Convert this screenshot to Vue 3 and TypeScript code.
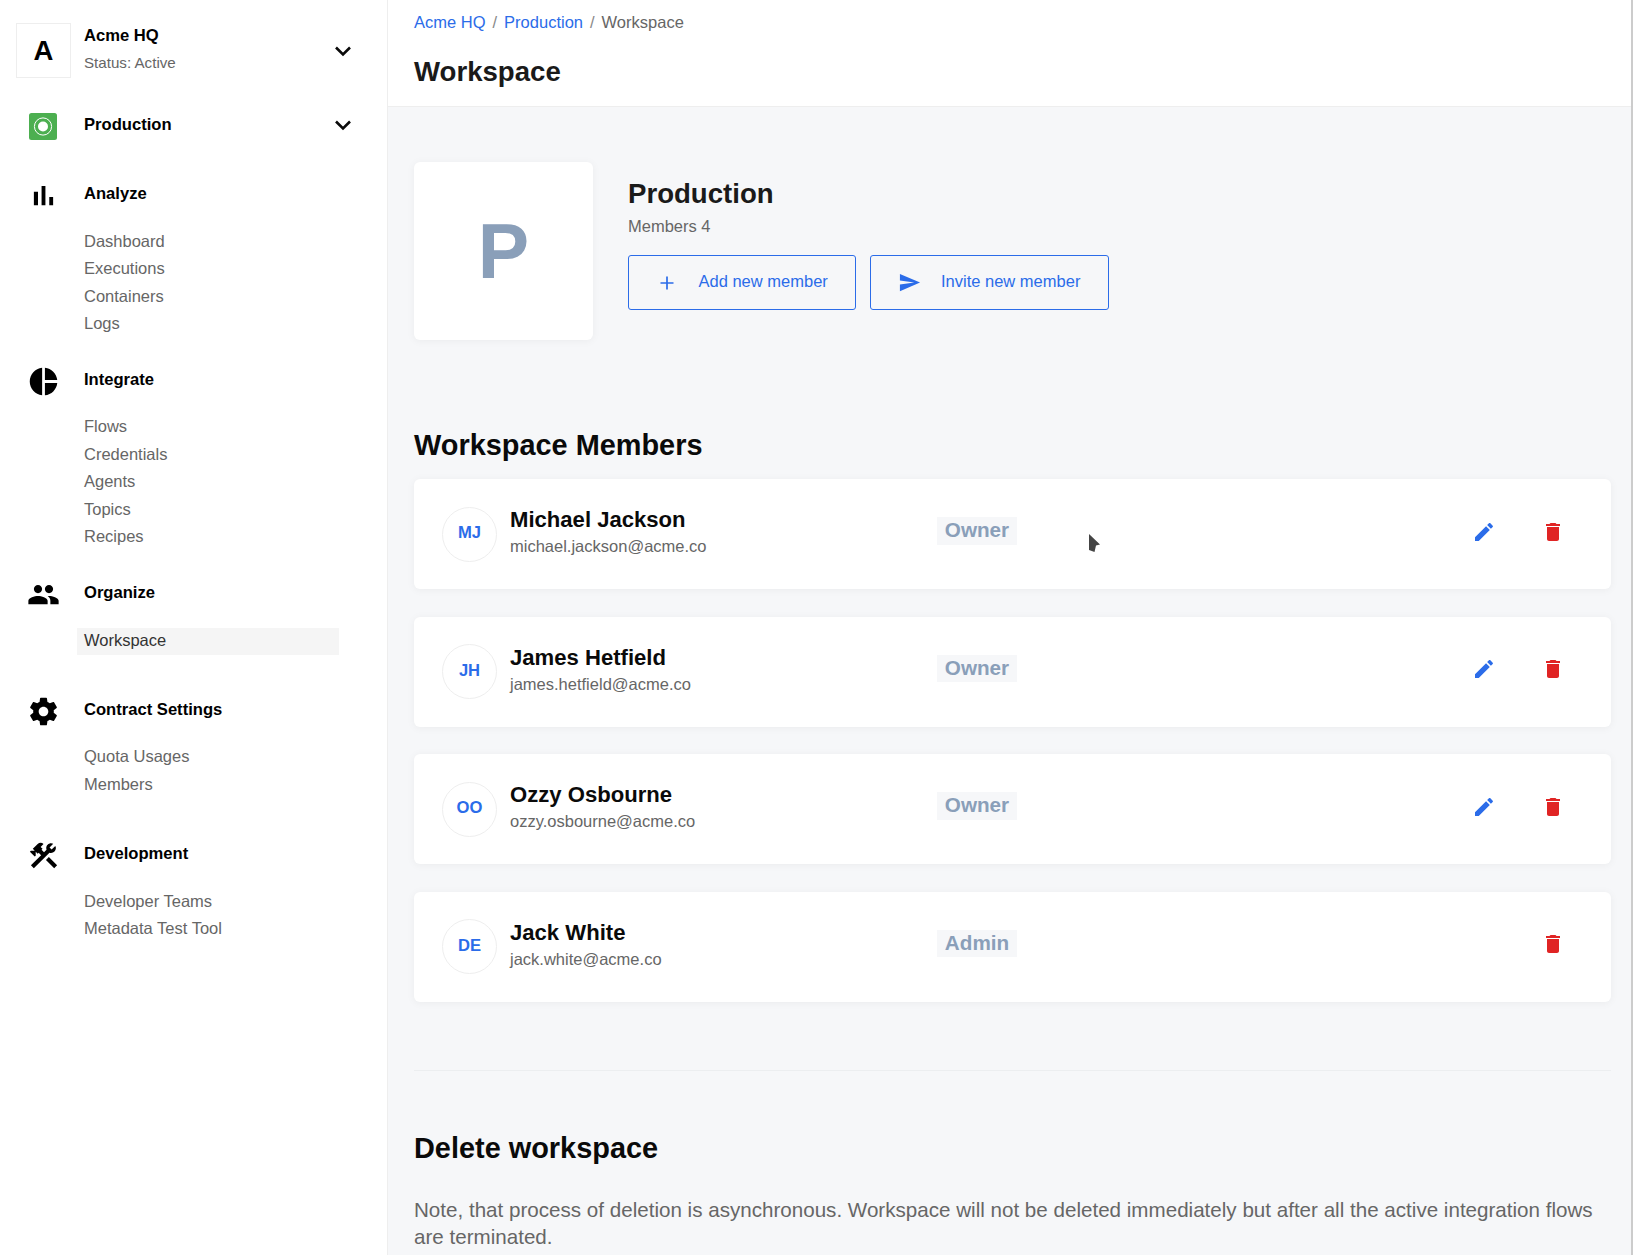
<script setup lang="ts">
interface Group {
  title: string
  icon: string
  items: string[]
  cls: string
}
interface Member {
  initials: string
  name: string
  email: string
  role: string
  editable: boolean
}

const groups: Group[] = [
  { title: 'Analyze', icon: 'bars', items: ['Dashboard', 'Executions', 'Containers', 'Logs'], cls: 'first' },
  { title: 'Integrate', icon: 'pie', items: ['Flows', 'Credentials', 'Agents', 'Topics', 'Recipes'], cls: '' },
  { title: 'Organize', icon: 'people', items: ['Workspace'], cls: '' },
  { title: 'Contract Settings', icon: 'gear', items: ['Quota Usages', 'Members'], cls: 'wide' },
  { title: 'Development', icon: 'tools', items: ['Developer Teams', 'Metadata Test Tool'], cls: 'wide' }
]

const icons: Record<string, string> = {
  bars: 'M5 9.2h3V19H5zM10.6 5h2.8v14h-2.8zM16.2 13H19v6h-2.8z',
  pie: 'M11 2v20c-5.07-.5-9-4.79-9-10s3.93-9.5 9-10zm2.03 0v8.99H22c-.47-4.74-4.24-8.52-8.97-8.99zm0 11.01V22c4.74-.47 8.5-4.25 8.97-8.99h-8.97z',
  people: 'M16 11c1.66 0 2.99-1.34 2.99-3S17.66 5 16 5c-1.66 0-3 1.34-3 3s1.34 3 3 3zm-8 0c1.66 0 2.99-1.34 2.99-3S9.66 5 8 5C6.34 5 5 6.34 5 8s1.34 3 3 3zm0 2c-2.33 0-7 1.17-7 3.5V19h14v-2.5c0-2.33-4.67-3.5-7-3.5zm8 0c-.29 0-.62.02-.97.05 1.16.84 1.97 1.97 1.97 3.45V19h6v-2.5c0-2.33-4.67-3.5-7-3.5z',
  gear: 'M19.43 12.98c.04-.32.07-.64.07-.98s-.03-.66-.07-.98l2.11-1.65c.19-.15.24-.42.12-.64l-2-3.46c-.12-.22-.39-.3-.61-.22l-2.49 1c-.52-.4-1.08-.73-1.69-.98l-.38-2.65C14.46 2.18 14.25 2 14 2h-4c-.25 0-.46.18-.49.42l-.38 2.65c-.61.25-1.17.59-1.69.98l-2.49-1c-.23-.09-.49 0-.61.22l-2 3.46c-.13.22-.07.49.12.64l2.11 1.65c-.04.32-.07.65-.07.98s.03.66.07.98l-2.11 1.65c-.19.15-.24.42-.12.64l2 3.46c.12.22.39.3.61.22l2.49-1c.52.4 1.08.73 1.69.98l.38 2.65c.03.24.24.42.49.42h4c.25 0 .46-.18.49-.42l.38-2.65c.61-.25 1.17-.59 1.69-.98l2.49 1c.23.09.49 0 .61-.22l2-3.46c.12-.22.07-.49-.12-.64l-2.11-1.65zM12 15.5c-1.93 0-3.5-1.57-3.5-3.5s1.57-3.5 3.5-3.5 3.5 1.57 3.5 3.5-1.57 3.5-3.5 3.5z',
  tools: 'M13.78 15.3L19.78 21.3L21.89 19.14L15.89 13.14L13.78 15.3M17.5 10.1C17.11 10.1 16.69 10.05 16.36 9.91L4.97 21.25L2.86 19.14L10.27 11.74L8.5 9.96L7.78 10.66L6.33 9.25V12.11L5.63 12.81L2.11 9.25L2.81 8.55H5.62L4.22 7.14L7.78 3.58C8.95 2.41 10.83 2.41 12 3.58L9.89 5.74L11.3 7.14L10.59 7.85L12.38 9.63L14.2 7.75C14.06 7.42 14 7 14 6.63C14 4.66 15.56 3.11 17.5 3.11C18.09 3.11 18.61 3.25 19.08 3.53L16.41 6.2L17.91 7.7L20.58 5.03C20.86 5.5 21 6 21 6.63C21 8.55 19.45 10.1 17.5 10.1Z'
}

const members: Member[] = [
  { initials: 'MJ', name: 'Michael Jackson', email: 'michael.jackson@acme.co', role: 'Owner', editable: true },
  { initials: 'JH', name: 'James Hetfield', email: 'james.hetfield@acme.co', role: 'Owner', editable: true },
  { initials: 'OO', name: 'Ozzy Osbourne', email: 'ozzy.osbourne@acme.co', role: 'Owner', editable: true },
  { initials: 'DE', name: 'Jack White', email: 'jack.white@acme.co', role: 'Admin', editable: false }
]
</script>

<template>
  <div class="app">
    <aside class="sidebar">
      <div class="account">
        <div class="logo-box">A</div>
        <div class="account-text">
          <div class="bold-label">Acme HQ</div>
          <div class="status">Status: Active</div>
        </div>
        <svg class="chevron" viewBox="0 0 18 12" width="18" height="12">
          <path d="M2 2.5l7 7 7-7" fill="none" stroke="#0a0a0a" stroke-width="2.6" />
        </svg>
      </div>

      <div class="env">
        <span class="env-slot">
          <svg width="28" height="27" viewBox="0 0 28 27">
            <rect width="28" height="27" rx="2.5" fill="#4caf50" />
            <circle cx="14" cy="13.5" r="8.6" fill="none" stroke="#fff" stroke-width="1" />
            <circle cx="14" cy="13.5" r="5" fill="#fff" />
          </svg>
        </span>
        <span class="bold-label env-name">Production</span>
        <svg class="chevron" viewBox="0 0 18 12" width="18" height="12">
          <path d="M2 2.5l7 7 7-7" fill="none" stroke="#0a0a0a" stroke-width="2.6" />
        </svg>
      </div>

      <section v-for="g in groups" :key="g.title" class="group" :class="g.cls">
        <div class="group-head">
          <span class="env-slot">
            <svg width="33" height="33" viewBox="0 0 24 24"><path :d="icons[g.icon]" fill="#000" /></svg>
          </span>
          <span class="bold-label">{{ g.title }}</span>
        </div>
        <ul class="nav">
          <li v-for="item in g.items" :key="item" :class="{ active: item === 'Workspace' }">{{ item }}</li>
        </ul>
      </section>
    </aside>

    <div class="main">
      <header class="topbar">
        <nav class="crumbs">
          <span class="link">Acme HQ</span><span class="sep">/</span>
          <span class="link">Production</span><span class="sep">/</span>
          <span>Workspace</span>
        </nav>
        <h1>Workspace</h1>
      </header>

      <main class="content">
        <div class="profile">
          <div class="tile">P</div>
          <div class="profile-info">
            <h2>Production</h2>
            <div class="count">Members 4</div>
            <div class="actions">
              <button class="btn add" type="button">
                <svg width="14" height="14" viewBox="0 0 14 14"><path d="M7 0.5v13M0.5 7h13" stroke="#2b6ce9" stroke-width="1.7" fill="none" /></svg>
                <span>Add new member</span>
              </button>
              <button class="btn invite" type="button">
                <svg width="23" height="23" viewBox="0 0 24 24"><path d="M2.01 21L23 12 2.01 3 2 10l15 2-15 2z" fill="#2b6ce9" /></svg>
                <span>Invite new member</span>
              </button>
            </div>
          </div>
        </div>

        <h3 class="section-title">Workspace Members</h3>
        <div class="members">
          <article v-for="m in members" :key="m.email" class="member">
            <div class="avatar">{{ m.initials }}</div>
            <div class="who">
              <div class="name">{{ m.name }}</div>
              <div class="email">{{ m.email }}</div>
            </div>
            <div class="role">{{ m.role }}</div>
            <div class="row-actions">
              <svg v-if="m.editable" class="icon-btn" width="24" height="24" viewBox="0 0 24 24">
                <path d="M3 17.25V21h3.75L17.81 9.94l-3.75-3.75L3 17.25zM20.71 7.04c.39-.39.39-1.02 0-1.41l-2.34-2.34c-.39-.39-1.02-.39-1.41 0l-1.83 1.83 3.75 3.75 1.83-1.83z" fill="#2b6ce9" />
              </svg>
              <svg class="icon-btn" width="24" height="24" viewBox="0 0 24 24">
                <path d="M6 19c0 1.1.9 2 2 2h8c1.1 0 2-.9 2-2V7H6v12zM19 4h-3.5l-1-1h-5l-1 1H5v2h14V4z" fill="#e02424" />
              </svg>
            </div>
          </article>
          <svg class="cursor" width="13" height="20" viewBox="0 0 13 20">
            <path d="M1 1L12 11.5L8 12.5L6.5 19L1 17z" fill="#444" />
          </svg>
        </div>

        <hr class="divider" />

        <h3 class="section-title delete-title">Delete workspace</h3>
        <p class="note">Note, that process of deletion is asynchronous. Workspace will not be deleted immediately but after all the active integration flows are terminated.</p>
      </main>
    </div>
  </div>
</template>

<style>
html, body {
  margin: 0;
  height: 1255px;
  overflow: hidden;
  background: #fff;
}
</style>

<style scoped>
.app {
  display: flex;
  width: 1633px;
  height: 1255px;
  font-family: "Liberation Sans", Arial, sans-serif;
  font-size: 16.5px;
  color: #666;
  overflow: hidden;
}
.sidebar {
  box-sizing: border-box;
  width: 388px;
  flex: none;
  background: #fff;
  border-right: 1px solid #eeeeee;
  padding: 23px 0 0 16px;
}
.account {
  display: flex;
  align-items: center;
  height: 55px;
}
.logo-box {
  box-sizing: border-box;
  width: 55px;
  height: 55px;
  flex: none;
  border: 1px solid #eeeeee;
  display: flex;
  align-items: center;
  justify-content: center;
  font-size: 27.5px;
  font-weight: 700;
  color: #000;
}
.account-text {
  margin-left: 13px;
  margin-top: -2px;
  width: 250px;
}
.bold-label {
  font-size: 16.6px;
  font-weight: 700;
  color: #000;
  line-height: 20px;
}
.status {
  font-size: 15.15px;
  line-height: 20px;
  color: #666;
  margin-top: 7px;
}
.chevron {
  flex: none;
}
.env {
  display: flex;
  align-items: center;
  height: 32px;
  margin-top: 31px;
}
.env-slot {
  width: 50px;
  flex: none;
  display: flex;
  justify-content: center;
  margin: 3px 15.8px 0 2.2px;
}
.env-name {
  width: 250px;
}
.group {
  margin-top: 25px;
}
.group.first {
  margin-top: 36px;
}
.group.wide {
  margin-top: 39px;
}
.group-head {
  display: flex;
  align-items: center;
  height: 34px;
}
.nav {
  list-style: none;
  margin: 16.6px 0 0;
  padding: 0;
  display: flex;
  flex-direction: column;
}
.nav li {
  box-sizing: border-box;
  height: 27.5px;
  line-height: 27.5px;
  margin-left: 61px;
  padding-left: 7px;
  width: 262px;
}
.nav li.active {
  background: #f5f5f5;
  color: #333;
  line-height: 25.5px;
  margin-top: 1.5px;
  margin-bottom: -1.5px;
}
.main {
  flex: 1;
  min-width: 0;
  display: flex;
  flex-direction: column;
  background: #f6f7f9;
  border-right: 2px solid #cccccc;
}
.topbar {
  box-sizing: border-box;
  height: 107px;
  background: #fff;
  border-bottom: 1px solid #eeeeee;
  padding: 0 26px;
  flex: none;
}
.crumbs {
  padding-top: 12px;
  line-height: 20px;
  display: flex;
  gap: 7px;
}
.link {
  color: #2b6ce9;
}
.sep {
  color: #888;
}
h1 {
  margin: 22px 0 0;
  font-size: 27.6px;
  line-height: 36px;
  font-weight: 700;
  color: #1a1a1a;
}
.content {
  padding: 55px 20px 0 26px;
}
.profile {
  display: flex;
  align-items: flex-start;
}
.tile {
  width: 179px;
  height: 178px;
  flex: none;
  background: #fff;
  border-radius: 6px;
  box-shadow: 0 1px 8px rgba(0, 0, 0, 0.05);
  display: flex;
  align-items: center;
  justify-content: center;
  font-size: 77px;
  font-weight: 700;
  color: #8a9fb9;
}
.profile-info {
  margin-left: 35px;
}
h2 {
  margin: 15px 0 0;
  font-size: 27.6px;
  line-height: 34px;
  font-weight: 700;
  color: #1a1a1a;
}
.count {
  margin-top: 5px;
  line-height: 20px;
}
.actions {
  display: flex;
  gap: 14px;
  margin-top: 19px;
}
.btn {
  box-sizing: border-box;
  height: 55px;
  background: transparent;
  border: 1px solid #2b6ce9;
  border-radius: 3px;
  color: #2b6ce9;
  font: inherit;
  display: flex;
  align-items: center;
  padding: 0;
}
.btn span {
  padding-bottom: 2px;
}
.btn.add {
  width: 228px;
  padding-left: 31px;
  gap: 24.5px;
}
.btn.invite {
  width: 239px;
  padding-left: 27px;
  gap: 20px;
}
.section-title {
  margin: 0;
  font-size: 28.9px;
  line-height: 38px;
  font-weight: 700;
  color: #0a0a0a;
}
.profile + .section-title {
  margin-top: 86.1px;
}
.members {
  position: relative;
  margin-top: 15px;
  display: flex;
  flex-direction: column;
  gap: 27.5px;
}
.member {
  box-sizing: border-box;
  height: 110px;
  background: #fff;
  border-radius: 6px;
  box-shadow: 0 1px 8px rgba(0, 0, 0, 0.05);
  padding-left: 28px;
  display: flex;
  align-items: center;
}
.avatar {
  box-sizing: border-box;
  width: 55px;
  height: 55px;
  flex: none;
  border: 1px solid #eeeeee;
  border-radius: 50%;
  padding-bottom: 2px;
  display: flex;
  align-items: center;
  justify-content: center;
  font-size: 16.6px;
  font-weight: 700;
  color: #2b6ce9;
}
.who {
  margin-left: 13px;
  width: 427px;
  flex: none;
  margin-top: -4.4px;
}
.name {
  font-size: 22.1px;
  line-height: 28px;
  font-weight: 700;
  color: #0a0a0a;
}
.email {
  line-height: 22px;
  margin-top: 1px;
}
.role {
  box-sizing: border-box;
  width: 80px;
  height: 27.5px;
  flex: none;
  background: #f6f7f9;
  color: #8a9fb9;
  font-size: 20.7px;
  font-weight: 700;
  line-height: 26px;
  text-align: center;
  margin-top: -6px;
}
.row-actions {
  margin-left: auto;
  margin-right: 46px;
  display: flex;
  justify-content: flex-end;
  gap: 44.7px;
  margin-top: -5px;
}
.icon-btn {
  flex: none;
}
.cursor {
  position: absolute;
  left: 674px;
  top: 54px;
}
.divider {
  border: 0;
  border-top: 1px solid #eceef0;
  margin: 68.7px 0 0;
}
.delete-title {
  margin-top: 58px;
}
.note {
  margin: 29px 0 0;
  font-size: 20.6px;
  line-height: 27px;
  color: #666;
}
</style>
